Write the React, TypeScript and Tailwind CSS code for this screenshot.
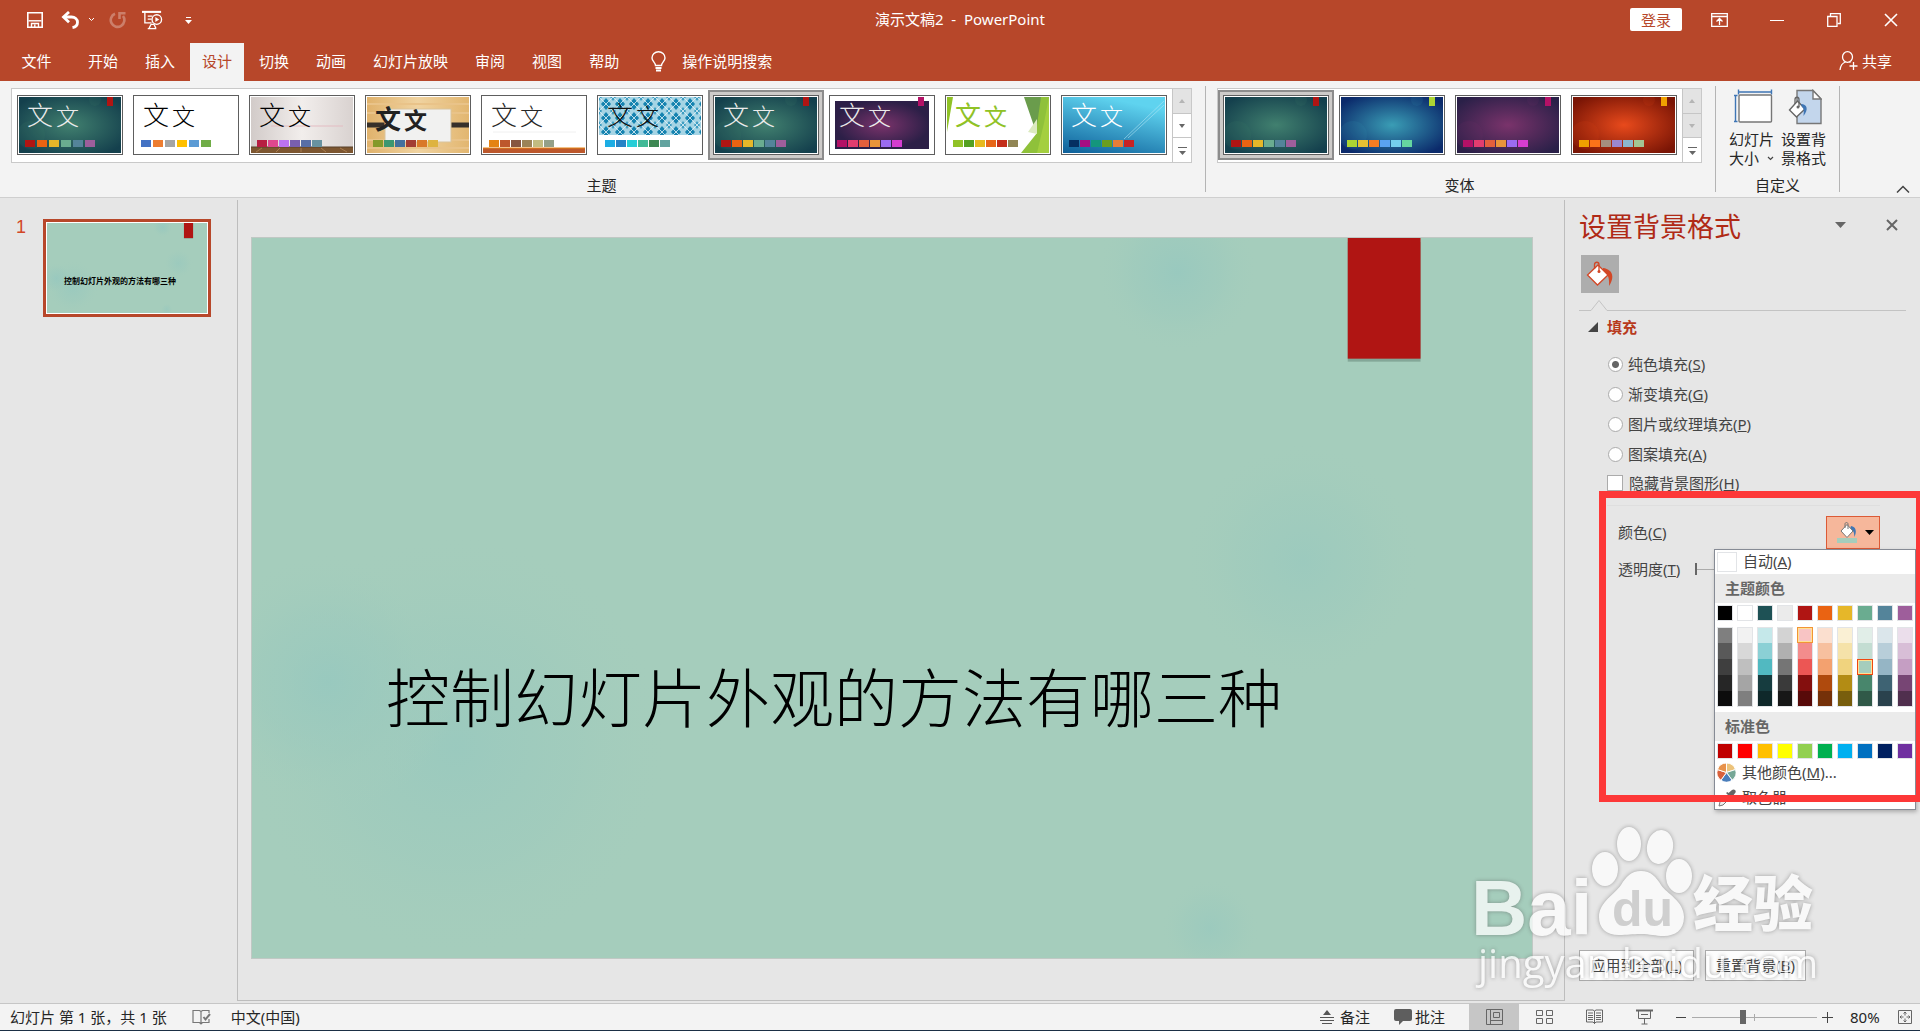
import React, { useState } from "react";
import type { ReactNode } from "react";

/* ---------- theme and variant data ---------- */

type ThemeItem = {
  name: string;
  art: ReactNode;
  text?: string;
  font?: string;
  swatches: string[];
  tight?: boolean;
};

function Glow({ id, inner, outer, tag, tagX = 88 }: { id: string; inner: string; outer: string; tag: string; tagX?: number }) {
  return (
    <>
      <defs>
        <radialGradient id={id} cx="0.5" cy="0.5" r="0.62">
          <stop offset="0" stopColor={inner} />
          <stop offset="1" stopColor={outer} />
        </radialGradient>
      </defs>
      <rect width="102" height="56" fill={`url(#${id})`} />
      <circle cx="12" cy="38" r="14" fill={inner} opacity="0.12" />
      <circle cx="76" cy="3" r="6" fill={inner} opacity="0.12" />
      <rect x={tagX} y="0" width="6" height="9" fill={tag} />
    </>
  );
}

const diamonds = (
  <>
    <defs>
      <pattern id="lattice" width="14" height="14" patternUnits="userSpaceOnUse">
        <rect width="14" height="14" fill="#a5d4e4" />
        <path d="M7 1l5 6-5 6-5-6z" fill="#1583b0" />
        <path d="M0 -4l3 4-3 4-3-4zM14 -4l3 4-3 4-3-4zM0 10l3 4-3 4-3-4zM14 10l3 4-3 4-3-4z" fill="#3c9dc2" />
        <path d="M0 0l14 14M14 0L0 14" stroke="#e6f3f7" strokeWidth="0.8" />
      </pattern>
    </defs>
    <rect width="102" height="56" fill="#fff" />
    <rect width="102" height="38" fill="url(#lattice)" />
  </>
);

const ionSwatches = ["#b01513", "#ea6312", "#e6b729", "#6aac90", "#54849a", "#9e5e9b"];

const themes: ThemeItem[] = [
  { name: "当前主题", art: <Glow id="t1" inner="#41806f" outer="#14404d" tag="#b01513" />, text: "text-[#ebebeb] font-light", swatches: ionSwatches },
  { name: "Office 主题", art: <rect width="102" height="56" fill="#fff" />, text: "text-black font-light", swatches: ["#4472c4", "#ed7d31", "#a5a5a5", "#ffc000", "#5b9bd5", "#70ad47"] },
  {
    name: "画廊",
    art: (
      <>
        <defs>
          <linearGradient id="wall" x1="0" x2="1">
            <stop offset="0" stopColor="#d2cbc9" />
            <stop offset="0.5" stopColor="#f2eeec" />
            <stop offset="1" stopColor="#d9d2d0" />
          </linearGradient>
        </defs>
        <rect width="102" height="56" fill="url(#wall)" />
        <path d="M20 29h72" stroke="#e3bcc2" />
        <rect y="50" width="102" height="6" fill="#7d5630" />
        <path d="M0 50h102" stroke="#59402a" />
        <path d="M5 55l6-4M25 55l4-4M50 55v-4M75 55l-5-4M96 55l-7-4" stroke="#a97d4f" />
      </>
    ),
    text: "text-black font-light",
    swatches: ["#b71e42", "#de478e", "#bc72f0", "#795faf", "#586ea6", "#6892a0"],
    tight: true,
  },
  {
    name: "木头类型",
    art: (
      <>
        <defs>
          <linearGradient id="wood" x1="0" x2="1">
            <stop offset="0" stopColor="#e0b26c" />
            <stop offset="0.5" stopColor="#f0d3a0" />
            <stop offset="1" stopColor="#e2b670" />
          </linearGradient>
        </defs>
        <rect width="102" height="56" fill="url(#wood)" />
        <path d="M0 7h102M0 16h102M0 43h102M0 51h102" stroke="#e9c389" strokeWidth="2" />
        <path d="M0 28h20M82 28h20" stroke="#37302a" strokeWidth="5" />
        <rect x="18" y="12" width="66" height="33" fill="#f1f1f0" stroke="#d9c39c" />
      </>
    ),
    text: "text-[#222] font-bold",
    font: "pt-1",
    swatches: ["#83992a", "#3c9770", "#44709d", "#a23c33", "#d97828", "#deb340"],
    tight: true,
  },
  {
    name: "回顾",
    art: (
      <>
        <rect width="102" height="56" fill="#fff" />
        <path d="M10 35h83" stroke="#f0f0f0" />
        <rect y="51" width="102" height="5" fill="#bd582c" />
        <path d="M0 51h102" stroke="#e48312" />
      </>
    ),
    text: "text-[#262626] font-light",
    swatches: ["#e48312", "#bd582c", "#865640", "#9b8357", "#c2bc80", "#94a088"],
    tight: true,
  },
  { name: "积分", art: diamonds, text: "text-[#111] font-light", swatches: ["#1cade4", "#2683c6", "#27ced7", "#42ba97", "#3e8853", "#62a39f"], tight: true },
  { name: "离子", art: <Glow id="t7" inner="#41806f" outer="#14404d" tag="#b01513" />, text: "text-[#ebebeb] font-light", swatches: ionSwatches, tight: true },
  {
    name: "离子会议室",
    art: (
      <>
        <defs>
          <radialGradient id="t8">
            <stop offset="0" stopColor="#7a336b" />
            <stop offset="1" stopColor="#2c1f47" />
          </radialGradient>
        </defs>
        <rect width="102" height="56" fill="#fff" />
        <rect x="4" y="4" width="94" height="48" fill="url(#t8)" />
        <rect x="87" width="6" height="9" fill="#b31166" />
      </>
    ),
    text: "text-[#ebebeb] font-light",
    swatches: ["#b31166", "#e33d6f", "#e45f3c", "#e9943a", "#9b6bf2", "#d53dd0"],
    tight: true,
  },
  {
    name: "平面",
    art: (
      <>
        <rect width="102" height="56" fill="#fff" />
        <path d="M0 0h6L0 35z" fill="#90c226" />
        <path d="M83 0h19v56H74l16-20z" fill="#8fc13a" />
        <path d="M77 0h17l-5 35z" fill="#6a9c4c" />
        <path d="M102 0v56H90l7-30z" fill="#a4cf3f" />
        <path d="M90 22l-9 13 9 2z" fill="#dceabf" />
      </>
    ),
    text: "text-[#90c226] font-normal",
    swatches: ["#90c226", "#54a021", "#e6b91e", "#e76618", "#c42f1a", "#918655"],
    tight: true,
  },
  {
    name: "切片",
    art: (
      <>
        <defs>
          <linearGradient id="slice" x1="0" y1="1" x2="0.4" y2="0">
            <stop offset="0" stopColor="#0d5f99" />
            <stop offset="1" stopColor="#5fd3ef" />
          </linearGradient>
        </defs>
        <rect width="102" height="56" fill="url(#slice)" />
        <path d="M61 42L101 4M65 41l36-33" stroke="#b5e6f5" strokeWidth="0.8" opacity="0.7" />
      </>
    ),
    text: "text-white font-light",
    swatches: ["#052f61", "#a50e82", "#14967c", "#6a9e1f", "#e87d37", "#c62324"],
    tight: true,
  },
];

const variants: ThemeItem[] = [
  { name: "变体 1", art: <Glow id="v1" inner="#41806f" outer="#14404d" tag="#b01513" />, swatches: ionSwatches, tight: true },
  { name: "变体 2", art: <Glow id="v2" inner="#3a9db5" outer="#0b2a6b" tag="#acd433" />, swatches: ["#acd433", "#e6c133", "#f47d22", "#5aa2f0", "#74cfec", "#65d6a0"], tight: true },
  { name: "变体 3", art: <Glow id="v3" inner="#7a336b" outer="#2a2048" tag="#b31166" />, swatches: ["#b31166", "#e33d6f", "#e45f3c", "#e9943a", "#9b6bf2", "#d53dd0"], tight: true },
  { name: "变体 4", art: <Glow id="v4" inner="#e84a1c" outer="#7a1505" tag="#f0a100" />, swatches: ["#f0a100", "#fc7219", "#a5907f", "#9b87cf", "#8cb7ce", "#a3c593"], tight: true },
];

const themeColors = ["#000000", "#ffffff", "#1e5155", "#ebebeb", "#b01513", "#ea6312", "#e6b729", "#6aac90", "#54849a", "#9e5e9b"];
const shades = [
  ["#7f7f7f", "#595959", "#3f3f3f", "#262626", "#0c0c0c"],
  ["#f2f2f2", "#d8d8d8", "#bfbfbf", "#a5a5a5", "#7f7f7f"],
  ["#c5e8ea", "#8bd0d5", "#51b9c1", "#163c3f", "#0f282a"],
  ["#d3d3d3", "#b0b0b0", "#757575", "#3a3a3a", "#171717"],
  ["#f8c4c4", "#f38c8c", "#ec5654", "#840f0e", "#580a09"],
  ["#fbdfcf", "#f7c09f", "#f3a16f", "#af4a0d", "#753109"],
  ["#faf0d4", "#f5e2a9", "#f0d37e", "#b38c14", "#785e0d"],
  ["#e1eee8", "#c3ddd2", "#a5cdbc", "#48866c", "#305948"],
  ["#dbe6eb", "#b8ced9", "#95b5c5", "#3e6373", "#2a424d"],
  ["#ebdeeb", "#d8bed7", "#c59ec3", "#774574", "#502f4e"],
];
const standardColors = ["#c00000", "#ff0000", "#ffc000", "#ffff00", "#92d050", "#00b050", "#00b0f0", "#0070c0", "#002060", "#7030a0"];

/* ---------- ribbon ---------- */

function ThumbButton({ item, selected }: { item: ThemeItem; selected?: boolean }) {
  return (
    <button
      type="button"
      aria-label={item.name}
      aria-pressed={!!selected}
      className={
        selected
          ? "h-[70px] w-[116px] border-2 border-[#8c8c8c] bg-[#cdcbc9] p-[3px]"
          : "h-[70px] w-[116px] p-[5px]"
      }
    >
      <span className="relative block h-[60px] w-[106px] border border-[#5e5e5e] bg-white p-px">
        <svg viewBox="0 0 102 56" className="h-[56px] w-[102px]" aria-hidden="true">
          {item.art}
        </svg>
        {item.text && (
          <span className={`absolute left-[9px] top-0 flex items-baseline gap-[3px] font-['Noto_Sans_CJK_SC',sans-serif] ${item.font ?? ""} ${item.text}`}>
            <span className="text-[26px] leading-9">文</span>
            <span className="text-[23px] leading-9">文</span>
          </span>
        )}
        <span className={item.tight ? "absolute bottom-[7px] left-[7px] flex gap-px" : "absolute bottom-[7px] left-[7px] flex gap-[2px]"}>
          {item.swatches.map((c) => (
            <span key={c} className="h-[7px] w-[10px]" style={{ backgroundColor: c }} />
          ))}
        </span>
      </span>
    </button>
  );
}

function GalleryScroll({ downDisabled }: { downDisabled?: boolean }) {
  return (
    <div className="flex w-[19px] flex-col border-l border-[#c6c6c6]">
      <button type="button" aria-label="上一行" className="flex flex-1 items-center justify-center border-b border-[#c6c6c6] bg-[#e3e3e3]">
        <svg width="6" height="4"><path d="M0 4l3-4 3 4z" fill="#b5b5b5" /></svg>
      </button>
      <button
        type="button"
        aria-label="下一行"
        className={
          downDisabled
            ? "flex flex-1 items-center justify-center border-b border-[#c6c6c6] bg-[#e3e3e3]"
            : "flex flex-1 items-center justify-center border-b border-[#c6c6c6] bg-white"
        }
      >
        <svg width="6" height="4"><path d="M0 0l3 4 3-4z" fill={downDisabled ? "#b5b5b5" : "#666"} /></svg>
      </button>
      <button type="button" aria-label="其他" className="flex flex-1 items-center justify-center bg-white">
        <svg width="9" height="9"><path d="M0 1.500h9" stroke="#666" /><path d="M1 5l3.500 4L8 5z" fill="#666" /></svg>
      </button>
    </div>
  );
}

function Gallery({ items, selected, label, downDisabled }: { items: ThemeItem[]; selected: number; label: string; downDisabled?: boolean }) {
  return (
    <section className="flex shrink-0 flex-col items-center" aria-label={label}>
      <div className="flex h-[75px] border border-[#c9c9c9] bg-white">
        <div className="flex pt-px">
          {items.map((t, i) => (
            <ThumbButton key={t.name} item={t} selected={i === selected} />
          ))}
        </div>
        <GalleryScroll downDisabled={downDisabled} />
      </div>
      <h2 className="mt-3 text-[15px] leading-5">{label}</h2>
    </section>
  );
}

function Separator() {
  return <div className="-mt-[2px] h-[106px] w-px shrink-0 bg-[#b4b4b4]" />;
}

function TitleBar() {
  return (
    <header className="grid h-[43px] grid-cols-[1fr_auto_1fr] items-start text-white">
      <div className="flex h-[39px] items-center pl-[26px]">
        <button type="button" aria-label="保存" className="mr-[17px]">
          <svg width="18" height="18" viewBox="0 0 18 18" fill="none" stroke="#fff" strokeWidth="1.6">
            <path d="M1.800 1.800h14.400v14.400H1.800z" />
            <path d="M2.500 9.800h13" strokeWidth="1.400" />
            <path d="M5.500 16v-3.500h7V16M8.800 16v-2.500" strokeWidth="1.400" />
          </svg>
        </button>
        <button type="button" aria-label="撤消">
          <svg width="19" height="18" viewBox="0 0 19 18" fill="none" stroke="#fff" strokeWidth="2.800">
            <path d="M8 1L2.500 6 8 11.200" />
            <path d="M3 6h7.500c3.500 0 6 2.300 6 5.200 0 2.800-2 4.800-5 5.300" />
          </svg>
        </button>
        <button type="button" aria-label="撤消选项" className="mx-2">
          <svg width="7" height="5" fill="none" stroke="#fff"><path d="M1 1l2.500 2.500L6 1" /></svg>
        </button>
        <button type="button" aria-label="重复" className="ml-[6px] opacity-30">
          <svg width="18" height="18" viewBox="0 0 18 18" fill="none" stroke="#fff" strokeWidth="2.600">
            <path d="M6 2.800A6.800 6.800 0 1 0 14 5M10.500 8V2.300h6" />
          </svg>
        </button>
        <button type="button" aria-label="从头开始" className="ml-[15px]">
          <svg width="21" height="20" viewBox="0 0 22 20" fill="none" stroke="#fff" strokeWidth="1.400">
            <path d="M0 1.500h20" strokeWidth="2.200" />
            <path d="M3 2v11h7" />
            <path d="M6 6h5M6 9h4" />
            <circle cx="15.500" cy="9.500" r="5" />
            <path d="M14 6.800v5.400l4-2.700z" fill="#fff" stroke="none" />
            <path d="M6 19h9M7.500 18.500l2-4h3l2 4" />
          </svg>
        </button>
        <button type="button" aria-label="自定义快速访问工具栏" className="ml-[22px]">
          <svg width="7" height="8"><path d="M1 1.500h5" stroke="#fff" /><path d="M0 4h7L3.500 8z" fill="#fff" /></svg>
        </button>
      </div>
      <h1 className="whitespace-pre text-[15px] leading-[39px]">演示文稿2  -  PowerPoint</h1>
      <div className="flex h-[39px] items-center justify-end pr-[22px]">
        <button type="button" className="mr-[29px] h-[23px] w-[52px] rounded-[2px] bg-white text-[15px] leading-5 text-[#b7472a]">登录</button>
        <button type="button" aria-label="功能区显示选项" className="mr-[42px]">
          <svg width="17" height="14" fill="none" stroke="#fff" strokeWidth="1.300"><path d="M.7.700h15.600v12.600H.7zM.7 3.500h15.600M8.500 12V6M5.500 8.500l3-3 3 3" /></svg>
        </button>
        <button type="button" aria-label="最小化" className="mr-[43px]">
          <svg width="14" height="14"><path d="M0 7.500h14" stroke="#fff" /></svg>
        </button>
        <button type="button" aria-label="还原" className="mr-[43px]">
          <svg width="14" height="14" fill="none" stroke="#fff"><path d="M.7 3.500H10v9.800H.7z" strokeWidth="1.300" /><path d="M3.500 3V.700h9.800v9.800H10.500" strokeWidth="1.300" /></svg>
        </button>
        <button type="button" aria-label="关闭">
          <svg width="14" height="14"><path d="M1 1l12 12M13 1L1 13" stroke="#fff" strokeWidth="1.600" /></svg>
        </button>
      </div>
    </header>
  );
}

const tabs = ["文件", "开始", "插入", "设计", "切换", "动画", "幻灯片放映", "审阅", "视图", "帮助"];

function TabRow() {
  return (
    <nav className="flex h-[38px] items-stretch text-[15px] text-white">
      <div className="flex gap-[3px]" role="tablist">
        {tabs.map((t) => (
          <button
            key={t}
            type="button"
            role="tab"
            aria-selected={t === "设计"}
            className={
              t === "设计"
                ? "bg-[#f3f3f3] px-3 pb-[2px] text-[#b7472a]"
                : t === "文件"
                  ? "w-[73px] pb-[2px]"
                  : "px-3 pb-[2px]"
            }
          >
            {t}
          </button>
        ))}
      </div>
      <button type="button" className="ml-5 flex items-center pb-[2px]">
        <svg width="15" height="21" viewBox="0 0 15 21" fill="none" stroke="#fff" strokeWidth="1.400" className="mr-4">
          <path d="M4.500 14.500c0-3-3.500-4.300-3.500-7.500a6.500 6.300 0 0 1 13 0c0 3.200-3.500 4.500-3.500 7.500z" />
          <path d="M4.500 17h6M5 19.500h5" strokeWidth="1.800" />
        </svg>
        操作说明搜索
      </button>
      <button type="button" className="ml-auto mr-[28px] flex items-center gap-1 pb-[2px]">
        <svg width="19" height="20" viewBox="0 0 19 20" fill="none" stroke="#fff" strokeWidth="1.300">
          <ellipse cx="8.500" cy="6" rx="5" ry="5.300" />
          <path d="M1 19c.5-4.500 2.500-7 5.500-8M10.500 11l1 .5M14.500 11v8M10.500 15h8" />
        </svg>
        共享
      </button>
    </nav>
  );
}

function Ribbon() {
  return (
    <div className="flex h-[117px] border-b border-[#cfcfcf] bg-[#f3f3f3] pl-[11px] pt-[7px] text-[#262626]">
      <Gallery items={themes} selected={6} label="主题" />
      <div className="w-[13px]" />
      <Separator />
      <div className="w-[11px]" />
      <Gallery items={variants} selected={0} label="变体" downDisabled />
      <div className="w-[13px]" />
      <Separator />
      <section className="flex w-[123px] shrink-0 flex-col items-center" aria-label="自定义">
        <div className="flex h-[75px] gap-[7px] text-[15px] leading-[19px]">
          <button type="button" className="flex w-[45px] flex-col items-center">
            <svg width="39" height="36" viewBox="0 0 39 36" fill="none" className="mb-[5px] ml-[3px] mt-px shrink-0">
              <path d="M4 3h34M4.500.500v5M37.500.500v5M1.500 6v27M0 6.500h3.500M0 32.500h3.500" stroke="#3f76b5" strokeWidth="1.400" />
              <rect x="5" y="6" width="32.500" height="27" rx="1" fill="#fff" stroke="#777" strokeWidth="1.400" />
            </svg>
            <span className="whitespace-nowrap">幻灯片</span>
            <span className="flex items-center gap-2 self-start whitespace-nowrap">
              大小
              <svg width="7" height="5" fill="none" stroke="#444" strokeWidth="1.200"><path d="M1 1l2.500 2.500L6 1" /></svg>
            </span>
          </button>
          <button type="button" className="flex w-[45px] flex-col items-center">
            <svg width="34" height="36" viewBox="0 0 34 36" className="mb-[5px] ml-[3px] mt-px shrink-0">
              <path d="M9 1.500h16l8 8.500v24.500H9z" fill="#c3d6ec" stroke="#777" strokeWidth="1.400" />
              <path d="M25 1.500V10h8z" fill="#fff" stroke="#777" strokeWidth="1.400" />
              <path d="M9.500 12L17 20l-8.500 8L1.500 21z" fill="#fff" stroke="#666" strokeWidth="1.400" />
              <path d="M7 15v-4.500c0-3 4-3 4 0V18" fill="none" stroke="#666" strokeWidth="1.300" />
              <circle cx="10" cy="18" r="1.500" fill="#666" />
              <path d="M13 15c6 0 8 5 2.500 12 .5-5 .5-8-1.500-9z" fill="#3f76b5" />
            </svg>
            <span className="whitespace-nowrap">设置背</span>
            <span className="whitespace-nowrap">景格式</span>
          </button>
        </div>
        <h2 className="mt-3 text-[15px] leading-5">自定义</h2>
      </section>
      <Separator />
      <button type="button" aria-label="折叠功能区" className="ml-auto mr-[10px] self-end pb-1">
        <svg width="14" height="8" fill="none" stroke="#444" strokeWidth="1.500"><path d="M1 7.500l6-6 6 6" /></svg>
      </button>
    </div>
  );
}

/* ---------- slide ---------- */

function SlideArt({ id }: { id: string }) {
  return (
    <svg viewBox="0 0 1282 722" className="absolute inset-0 h-full w-full" aria-hidden="true">
      <defs>
        <radialGradient id={id}>
          <stop offset="0" stopColor="#96c8bf" />
          <stop offset="0.55" stopColor="#9dcabd" stopOpacity="0.7" />
          <stop offset="1" stopColor="#a5cdbc" stopOpacity="0" />
        </radialGradient>
      </defs>
      <circle cx="204" cy="510" r="215" fill={`url(#${id})`} opacity="0.7" />
      <circle cx="75" cy="445" r="130" fill={`url(#${id})`} opacity="0.8" />
      <circle cx="927" cy="34" r="82" fill={`url(#${id})`} opacity="0.8" />
      <circle cx="1053" cy="324" r="120" fill={`url(#${id})`} opacity="0.6" />
      <circle cx="960" cy="692" r="50" fill={`url(#${id})`} opacity="0.6" />
      <rect x="1098" y="4" width="73" height="120" fill="#5b7a6c" opacity="0.45" />
      <rect x="1098" y="0" width="73" height="121" fill="#b01513" />
    </svg>
  );
}

function SlideList() {
  return (
    <aside className="w-[238px] shrink-0 border-r border-[#bdbdbd] pt-[19px]" aria-label="幻灯片缩略图">
      <button type="button" className="flex items-start text-left">
        <span className="w-[43px] pl-4 font-['Liberation_Sans',sans-serif] text-[18px] leading-[17px] text-[#d24726]">1</span>
        <span className="relative block h-[98px] w-[168px] border-[3px] border-[#b7472a] bg-white p-px">
          <span className="relative flex h-full w-full items-center justify-center bg-[#a5cdbc]">
            <SlideArt id="thumbglow" />
            <span className="relative mr-[14px] mt-[26px] whitespace-nowrap text-[8px] font-bold leading-3 text-black">控制幻灯片外观的方法有哪三种</span>
          </span>
        </span>
      </button>
    </aside>
  );
}

function Canvas() {
  return (
    <main className="min-w-0 flex-1 border-b border-r border-[#bdbdbd] pl-[13px] pr-[31px] pt-[37px]">
      <div className="relative aspect-[1282/722] w-full border border-[#c0c8c4] bg-[#a5cdbc]">
        <SlideArt id="slideglow" />
        <h2 className="absolute left-[134px] top-[57%] whitespace-nowrap font-['Noto_Sans_CJK_SC',sans-serif] text-[64px] font-light leading-[92px] text-black">
          控制幻灯片外观的方法有哪三种
        </h2>
      </div>
    </main>
  );
}

/* ---------- format pane ---------- */

function ColorMenu() {
  return (
    <div role="menu" className="absolute -right-9 top-full z-10 h-[261px] w-[202px] border border-[#868b95] bg-white text-[15px] text-[#444] shadow-[1px_2px_4px_rgba(0,0,0,0.25)]">
      <button type="button" role="menuitem" className="flex h-6 w-full items-center pl-[2px]">
        <span className="mr-[6px] h-5 w-5 border border-[#e2e4e7] bg-white" />
        <span>自动(<u>A</u>)</span>
      </button>
      <h4 className="h-[29px] bg-[#ebebeb] pl-[10px] font-bold leading-[28px] text-[#666]">主题颜色</h4>
      <div className="flex gap-1 pl-[2px] pt-[2px]">
        {themeColors.map((c) => (
          <button key={c} type="button" aria-label={c} className="h-4 w-4 border border-[#e2e4e7]" style={{ backgroundColor: c }} />
        ))}
      </div>
      <div className="flex gap-1 pb-[5px] pl-[2px] pt-[6px]">
        {shades.map((col, i) => (
          <div key={i} className="flex w-4 flex-col border border-[#e2e4e7]">
            {col.map((c, j) => (
              <button
                key={j}
                type="button"
                aria-label={c}
                className={
                  i === 4 && j === 0
                    ? "-mx-px -mt-px h-4 border border-[#f29436] ring-1 ring-inset ring-[#ffe294]"
                    : i === 7 && j === 2
                      ? "-mx-px h-4 border border-[#ef4810] ring-1 ring-inset ring-[#ffe294]"
                      : j === 0 || j === 4
                        ? "h-[15px]"
                        : "h-4"
                }
                style={{ backgroundColor: c }}
              />
            ))}
          </div>
        ))}
      </div>
      <h4 className="h-[29px] bg-[#ebebeb] pl-[10px] font-bold leading-[28px] text-[#666]">标准色</h4>
      <div className="flex gap-1 pl-[2px] pt-[2px]">
        {standardColors.map((c) => (
          <button key={c} type="button" aria-label={c} className="h-4 w-4 border border-[#e2e4e7]" style={{ backgroundColor: c }} />
        ))}
      </div>
      <button type="button" role="menuitem" className="mt-1 flex h-5 w-full items-center pl-[2px]">
        <svg width="19" height="19" viewBox="-10 -10 20 20" className="mr-[6px]" stroke="#fff">
          <path d="M0 0V-10A10 10 0 0 1 9.500-3.100z" fill="#ecc37b" />
          <path d="M0 0L9.500-3.100A10 10 0 0 1 5.900 8.100z" fill="#76a797" />
          <path d="M0 0L5.900 8.100A10 10 0 0 1-5.900 8.100z" fill="#4a7ebb" />
          <path d="M0 0L-5.900 8.100A10 10 0 0 1-9.500-3.100z" fill="#d9603b" />
          <path d="M0 0L-9.500-3.100A10 10 0 0 1 0-10z" fill="#e8924a" />
        </svg>
        <span>其他颜色(<u>M</u>)...</span>
      </button>
      <button type="button" role="menuitem" className="mt-[3px] flex h-6 w-full items-center pl-[3px]">
        <svg width="18" height="18" viewBox="0 0 18 18" className="mr-[6px]">
          <path d="M1 17l1-4 7-7 3 3-7 7z" fill="#eee" stroke="#777" />
          <path d="M8 4l6 6 1.500-1.500-1-1 3-4c1-2-1.500-4-3.500-2.500l-3.500 3-1-1z" fill="#666" />
        </svg>
        <span>取色器</span>
      </button>
    </div>
  );
}

function FormatPane() {
  const [fill, setFill] = useState("S");
  const fills: [string, string][] = [
    ["S", "纯色填充"],
    ["G", "渐变填充"],
    ["P", "图片或纹理填充"],
    ["A", "图案填充"],
  ];
  return (
    <aside className="flex w-[355px] shrink-0 flex-col text-[15px] text-[#444]" aria-label="设置背景格式">
      <div className="mb-[2px] flex h-[53px] items-center pl-[14px] pr-[22px]">
        <h2 className="text-[27px] leading-9 text-[#b02a16]">设置背景格式</h2>
        <button type="button" aria-label="任务窗格选项" className="ml-auto mr-10 pb-1">
          <svg width="11" height="6"><path d="M0 0h11L5.500 6z" fill="#666" /></svg>
        </button>
        <button type="button" aria-label="关闭窗格" className="pb-1">
          <svg width="12" height="12"><path d="M1 1l10 10M11 1L1 11" stroke="#666" strokeWidth="2" /></svg>
        </button>
      </div>
      <button type="button" aria-label="填充" className="ml-4 flex h-[38px] w-[38px] items-center justify-center bg-[#adadad]">
        <svg width="28" height="26" viewBox="0 0 28 26">
          <path d="M17 7c8 1 13 7 6 18 .5-9-1-12-6-14z" fill="#d24726" />
          <path d="M12 4l10 10-10.500 10L1.500 14z" fill="#fff" stroke="#d24726" strokeWidth="1.300" />
          <path d="M8.500 8V3.500c0-3 4.500-3 4.500 0V10" fill="none" stroke="#d24726" strokeWidth="1.300" />
          <circle cx="13" cy="10.500" r="1.500" fill="#d24726" />
        </svg>
      </button>
      <svg className="ml-[14px] mt-[6px] block h-3 w-[327px]" fill="none" stroke="#c3c3c3" aria-hidden="true">
        <path d="M0 11.500h12l8-10 8 10h299" />
      </svg>
      <h3 className="mt-[6px] flex items-center pl-[23px] font-bold leading-5 text-[#b83b1d]">
        <svg width="10" height="10" className="mr-[9px]"><path d="M10 0v10H0z" fill="#444" /></svg>
        填充
      </h3>
      <div className="relative mt-3 flex-1">
        <fieldset aria-label="填充">
          {fills.map(([k, label]) => (
            <label key={k} className="flex h-[30px] items-center pl-[43px] leading-5">
              <input
                type="radio"
                name="fill"
                checked={fill === k}
                onChange={() => setFill(k)}
                className="mr-[5px] h-[15px] w-[15px] appearance-none rounded-full border border-[#ababab] bg-white bg-[radial-gradient(circle,#666_0,#666_3px,transparent_4px)] [&:not(:checked)]:bg-none"
              />
              <span>{label}(<u>{k}</u>)</span>
            </label>
          ))}
          <label className="flex h-[28px] items-center pl-[42px] leading-5">
            <input type="checkbox" className="mr-[6px] h-4 w-4 appearance-none border border-[#ababab] bg-white" />
            <span>隐藏背景图形(<u>H</u>)</span>
          </label>
        </fieldset>
        <div className="ml-[42px] mr-10 mt-2 border-t border-[#dedede]" />
        <div className="relative mt-[9px] flex h-[34px] items-center justify-between pl-[53px] pr-10">
          <span>颜色(<u>C</u>)</span>
          <div className="relative">
            <button type="button" aria-label="颜色" aria-expanded="true" className="flex h-[33px] w-[54px] items-center justify-between border border-[#dc5a36] bg-[#f6b79b] pl-[10px] pr-[5px]">
              <svg width="21" height="21" viewBox="0 0 21 21">
                <path d="M14 4c5 1 6 5 3.500 11-.5-5-1-7-4.500-8z" fill="#3f76b5" />
                <path d="M10 2.500l6 6.500-6 6.500L4 9z" fill="#fff" stroke="#777" />
                <path d="M8 6V2c0-2 3-2 3 0v5" fill="none" stroke="#777" />
                <rect y="16" width="20" height="5" fill="#a5cdbc" />
              </svg>
              <svg width="9" height="5"><path d="M0 0h9L4.500 5z" fill="#000" /></svg>
            </button>
            <ColorMenu />
          </div>
        </div>
        <div className="mt-2 flex h-6 items-center pl-[53px]">
          <label htmlFor="transparency" className="mr-[15px]">透明度(<u>T</u>)</label>
          <input
            id="transparency"
            type="range"
            defaultValue={0}
            className="h-3 w-[120px] appearance-none bg-[linear-gradient(#ababab,#ababab)] bg-[length:100%_1px] bg-center bg-no-repeat [&::-webkit-slider-thumb]:h-3 [&::-webkit-slider-thumb]:w-[2px] [&::-webkit-slider-thumb]:appearance-none [&::-webkit-slider-thumb]:bg-[#666]"
          />
        </div>
        <div className="pointer-events-none absolute -right-[3px] left-[34px] top-[142px] z-20 h-[311px] border-[7px] border-[#fd3838]" />
      </div>
      <div className="mb-5 ml-[14px] flex gap-[11px]">
        <button type="button" className="h-[31px] w-[115px] border border-[#ababab] bg-[#fdfdfd]">应用到全部(<u>L</u>)</button>
        <button type="button" className="h-[31px] w-[101px] border border-[#ababab] bg-[#fdfdfd]">重置背景(<u>B</u>)</button>
      </div>
    </aside>
  );
}

/* ---------- status bar ---------- */

function StatusBar() {
  return (
    <footer className="flex h-7 items-stretch border-b border-t border-b-[#1b2f45] border-t-[#c6c6c6] bg-[#f3f3f3] text-[15px] leading-[26px] text-[#262626]">
      <span className="ml-[10px] whitespace-pre">幻灯片 第 1 张，共 1 张</span>
      <button type="button" aria-label="拼写检查" className="ml-[25px] flex items-center">
        <svg width="19" height="16" viewBox="0 0 19 16" fill="none" stroke="#777" strokeWidth="1.200">
          <path d="M9 2.500L7.500 1.500H1v12h6.500L9 15l1.500-1.500H17V10M9 2.500V15M9 2.500l1.500-1H17V4" />
          <path d="M11.500 8l2 2.500L18 5" strokeWidth="2" />
        </svg>
      </button>
      <button type="button" className="ml-5">中文(中国)</button>
      <div className="ml-auto flex items-stretch">
        <button type="button" className="mr-6 flex items-center gap-[6px]">
          <svg width="14" height="14"><path d="M3 5l4-5 4 5z" fill="#555" /><path d="M0 7.500h14M0 10.500h14M2 13.500h10" stroke="#555" /></svg>
          备注
        </button>
        <button type="button" className="mr-6 flex items-center gap-[3px]">
          <svg width="18" height="16"><path d="M2 0h14q2 0 2 2v8q0 2-2 2H9l-4 4v-4H2q-2 0-2-2V2q0-2 2-2z" fill="#5e5e5e" /></svg>
          批注
        </button>
        <button type="button" aria-label="普通" aria-pressed="true" className="flex w-[50px] items-center justify-center bg-[#c6c6c6]">
          <svg width="17" height="16" fill="none" stroke="#666"><path d="M.500.500h16v15H.5zM4.500.500v15M7.500 3.500h6v5h-6zM4.500 11.500h12" /></svg>
        </button>
        <button type="button" aria-label="幻灯片浏览" className="flex w-[50px] items-center justify-center">
          <svg width="17" height="16" fill="none" stroke="#666"><path d="M.5 1.500h6v5h-6zM10.500 1.500h6v5h-6zM.5 9.500h6v5h-6zM10.500 9.500h6v5h-6z" /></svg>
        </button>
        <button type="button" aria-label="阅读视图" className="flex w-[50px] items-center justify-center">
          <svg width="17" height="16" fill="none" stroke="#666"><path d="M8.500 2L7 1H.5v12H7l1.500 1.500L10 13h6.500V1H10zM8.500 2v13M2 4h5M2 6.500h5M2 8.500h5M2 10.500h5M10 4h5M10 6.500h5M10 8.500h5M10 10.500h5" /></svg>
        </button>
        <button type="button" aria-label="幻灯片放映" className="flex w-[50px] items-center justify-center">
          <svg width="17" height="16" fill="none" stroke="#666"><path d="M0 1.500h17" strokeWidth="2" /><path d="M2.500 2v7.500h12V2M5 5.500h7M8.500 10v5M5.500 15h6" /></svg>
        </button>
        <button type="button" aria-label="缩小" className="ml-[7px] flex items-center">
          <svg width="10" height="11"><path d="M0 5.500h10" stroke="#444" /></svg>
        </button>
        <div className="relative ml-[6px] mr-[5px] flex items-center">
          <span className="absolute left-[62px] h-[7px] w-px bg-[#ababab]" />
          <input
            type="range"
            aria-label="显示比例"
            min={0}
            max={100}
            defaultValue={40}
            className="h-[14px] w-[125px] appearance-none bg-[linear-gradient(#ababab,#ababab)] bg-[length:100%_1px] bg-center bg-no-repeat [&::-webkit-slider-thumb]:h-[14px] [&::-webkit-slider-thumb]:w-[6px] [&::-webkit-slider-thumb]:appearance-none [&::-webkit-slider-thumb]:bg-[#666]"
          />
        </div>
        <button type="button" aria-label="放大" className="flex items-center">
          <svg width="11" height="11"><path d="M0 5.500h11M5.500 0v11" stroke="#444" /></svg>
        </button>
        <button type="button" className="ml-[17px] w-[30px] text-left">80%</button>
        <button type="button" aria-label="适应窗口" className="ml-[18px] mr-2 flex items-center">
          <svg width="14" height="14" fill="none" stroke="#666"><path d="M.500.500h13v13H.5zM7 2v3.500M5.500 3.500L7 2l1.500 1.500M7 12V8.500M5.500 10.500L7 12l1.500-1.500M2 7h3.500M3.500 5.500L2 7l1.500 1.500M12 7H8.500M10.500 5.500L12 7l-1.500 1.500" /></svg>
        </button>
      </div>
    </footer>
  );
}

/* ---------- watermark ---------- */

function Watermark() {
  return (
    <div className="pointer-events-none absolute bottom-[38px] right-[96px] z-30 h-[170px] w-[350px] text-white opacity-75 drop-shadow-[0_0_2px_rgba(90,90,90,0.7)]">
      <span className="absolute left-[-3px] top-[40px] font-['Liberation_Sans',sans-serif] text-[78px] font-bold leading-[90px]">Bai</span>
      <svg width="106" height="114" viewBox="0 0 106 114" className="absolute left-[116px] top-[2px]" fill="#fff">
        <ellipse cx="15" cy="44" rx="13" ry="17" />
        <ellipse cx="39" cy="19" rx="12" ry="17" />
        <ellipse cx="70" cy="22" rx="13" ry="17" transform="rotate(10 70 22)" />
        <ellipse cx="89" cy="51" rx="13" ry="17" />
        <path d="M51 46c10 0 15 6 20 14 6 9 23 16 23 32 0 13-9 19-20 19-9 0-14-2-23-2s-14 1-22 1C16 110 9 103 9 92c0-15 16-23 22-32 5-8 10-14 20-14z" />
      </svg>
      <span className="absolute left-[138px] top-[56px] font-['Liberation_Sans',sans-serif] text-[50px] font-bold leading-[60px] text-[#c8c8c8]">du</span>
      <span className="absolute left-[219px] top-[38px] text-[60px] font-black leading-[84px]">经验</span>
      <span className="absolute left-[4px] top-[112px] whitespace-nowrap font-['Open_Sans',sans-serif] text-[40px] leading-[56px]">jingyan.baidu.com</span>
    </div>
  );
}

export default function App() {
  return (
    <div className="relative flex h-screen flex-col overflow-hidden bg-[#e6e6e6] font-['Noto_Sans','Noto_Sans_CJK_SC',sans-serif]" lang="zh-CN">
      <div className="bg-[#b7472a]">
        <TitleBar />
        <TabRow />
      </div>
      <Ribbon />
      <div className="flex min-h-0 flex-1 overflow-hidden py-[2px]">
        <SlideList />
        <Canvas />
        <FormatPane />
      </div>
      <StatusBar />
      <Watermark />
    </div>
  );
}
